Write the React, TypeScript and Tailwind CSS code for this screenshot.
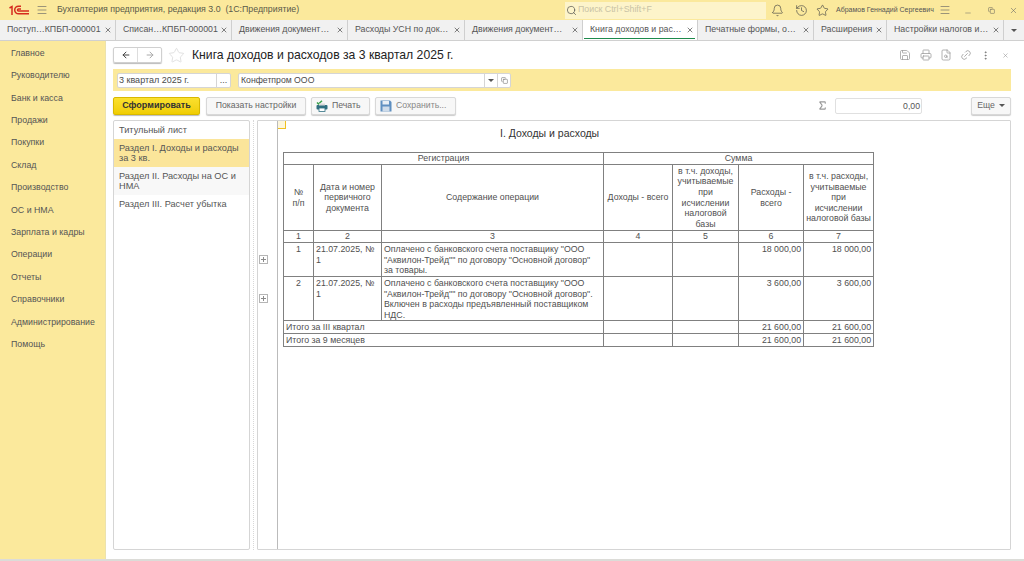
import { Bell, History, Star, Search, Menu, X, ArrowLeft, ArrowRight, Save, Printer, Link2, EllipsisVertical, Minus, Sigma, Copy, FileSearch } from 'lucide-react';

const menu = ['Главное', 'Руководителю', 'Банк и касса', 'Продажи', 'Покупки', 'Склад', 'Производство', 'ОС и НМА', 'Зарплата и кадры', 'Операции', 'Отчеты', 'Справочники', 'Администрирование', 'Помощь'];

const tabs = [
  { label: 'Поступ…КПБП-000001', w: 'w-[116px]' },
  { label: 'Списан…КПБП-000001', w: 'w-[116px]' },
  { label: 'Движения документ…', w: 'w-[116px]' },
  { label: 'Расходы УСН по док…', w: 'w-[117px]' },
  { label: 'Движения документ…', w: 'w-[118px]' },
  { label: 'Книга доходов и рас…', w: 'w-[115px]', active: true },
  { label: 'Печатные формы, о…', w: 'w-[116px]' },
  { label: 'Расширения', w: 'w-[73px]' },
  { label: 'Настройки налогов и…', w: 'w-[117px]' },
];

const th = 'border border-[#808080] font-normal align-middle text-center p-0 leading-[10.6px]';
const td = 'border border-[#808080] align-top px-[2px] pt-[1px] leading-[10.6px]';
const num = td + ' text-right';

function TriangleDown() {
  return <span className="w-0 h-0 border-x-[3px] border-t-[3px] border-x-transparent border-t-[#555]" />;
}

function PlusBox({ className }: { className: string }) {
  return (
    <svg viewBox="0 0 9 9" className={`absolute left-[1px] w-[9px] h-[9px] ${className}`} fill="none" strokeWidth="1">
      <rect x="0.5" y="0.5" width="8" height="8" stroke="#b5b5b5" />
      <path d="M4.500 2v5M2 4.500h5" stroke="#8a8a8a" />
    </svg>
  );
}

function PrintIcon() {
  return (
    <svg viewBox="0 0 12 12" className="w-[12px] h-[12px]">
      <path d="M1 2.500l1.500 1.500L6 .8" fill="none" stroke="#3aa04a" strokeWidth="1.500" />
      <rect x="0.500" y="5" width="11" height="4.500" rx="1" fill="#2f6f80" />
      <rect x="3" y="3.500" width="6" height="2" fill="#d9d9d9" />
      <rect x="3" y="8" width="6" height="3.500" fill="#fff" stroke="#2f6f80" strokeWidth="0.800" />
    </svg>
  );
}

function SaveIcon() {
  return (
    <svg viewBox="0 0 12 12" className="w-[12px] h-[12px]">
      <path d="M.5.5h9.500l1.500 1.500v9.500H.5z" fill="#5f8fc0" />
      <rect x="2.500" y="1" width="6.500" height="3.500" fill="#e8eef5" />
      <rect x="2.500" y="6.500" width="7" height="5" fill="#cfdcea" />
    </svg>
  );
}

export default function App() {
  return (
    <div className="w-[1024px] h-[561px] overflow-hidden flex flex-col bg-white text-[#4b4b4b] font-['Liberation_Sans',sans-serif]">
      <header className="h-5 shrink-0 flex items-center bg-[#fbe99c] text-[8.800px]">
        <svg viewBox="0 0 20 10" className="w-[20px] h-[10px] ml-[9px]" fill="none" stroke="#d62b1f" strokeWidth="1.5">
          <path d="M.5 3l2.500-1.500V10" />
          <path d="M12 1.200H9.500a3.800 3.800 0 0 0 0 7.600H20" />
          <path d="M12 4H9.500a1 1 0 0 0 0 2H20" />
        </svg>
        <Menu className="w-[12px] h-[12px] ml-[7px] text-[#666]" strokeWidth={1.3} />
        <span className="ml-[9px] w-[245px] whitespace-nowrap text-[#5a5a4a]">Бухгалтерия предприятия, редакция 3.0&nbsp; (1С:Предприятие)</span>
        <div className="ml-[263px] w-[201px] h-[17px] bg-[#fdf4ca] flex items-center pl-[1px] text-[#c9c3a5]">
          <Search className="w-[11px] h-[11px] text-[#444]" strokeWidth={1.4} />
          <span className="ml-[1px]">Поиск Ctrl+Shift+F</span>
        </div>
        <Bell className="w-[13px] h-[13px] ml-[4.500px] text-[#444]" strokeWidth={1.2} />
        <History className="w-[13px] h-[13px] ml-[11px] text-[#444]" strokeWidth={1.2} />
        <Star className="w-[13px] h-[13px] ml-[8px] text-[#444]" strokeWidth={1.2} />
        <span className="ml-[7.500px] w-[96px] whitespace-nowrap text-[7px] text-[#555]">Абрамов Геннадий Сергеевич</span>
        <Menu className="w-[12px] h-[12px] ml-[7px] text-[#666]" strokeWidth={1.3} />
        <Minus className="w-[8px] h-[8px] ml-[13px] mt-[5px] text-[#666]" strokeWidth={1.5} />
        <Copy className="w-[7px] h-[7px] ml-[15.500px] text-[#555]" strokeWidth={1.6} />
        <X className="w-[9px] h-[9px] ml-[14px] text-[#666]" strokeWidth={1.5} />
      </header>

      <nav className="h-[21px] shrink-0 flex bg-[#f1f1f1] border-b border-[#d0d0d0] text-[8.800px]">
        {tabs.map((t) => (
          <div key={t.label + t.w} className={`${t.w} shrink-0 h-full flex items-center justify-between pl-[7px] pr-[3px] border-r border-[#cfcfcf] ${t.active ? 'bg-white' : ''} relative`}>
            <span className="whitespace-nowrap text-[#555]">{t.label}</span>
            <X className="w-[8px] h-[8px] text-[#444] shrink-0" strokeWidth={2} />
            {t.active && <span className="absolute left-[1px] right-[2px] bottom-[1px] h-px bg-[#1e8a4c]" />}
          </div>
        ))}
        <div className="flex-1 flex items-center justify-center"><TriangleDown /></div>
      </nav>

      <div className="flex-1 min-h-0 flex">
        <aside className="w-[106px] shrink-0 bg-[#fbe99c] border-r border-[#ece2ad] pt-[1.300px] text-[8.800px] text-[#555]">
          {menu.map((m) => (
            <div key={m} className="h-[22.400px] flex items-center pl-[11px]">{m}</div>
          ))}
        </aside>

        <main className="flex-1 min-w-0 flex flex-col pl-[7px] pr-[13px] pb-[9px]">
          <div className="h-[28px] shrink-0 flex items-center">
            <div className="w-[49px] h-[16px] flex rounded-[2px] border border-[#d0d0d0] shadow-[0_1px_1px_#bbb]">
              <div className="flex-1 flex items-center justify-center border-r border-[#ddd]"><ArrowLeft className="w-[10px] h-[10px] text-[#444]" strokeWidth={2.4} /></div>
              <div className="flex-1 flex items-center justify-center"><ArrowRight className="w-[10px] h-[10px] text-[#aaa]" strokeWidth={2.4} /></div>
            </div>
            <Star className="w-[17px] h-[17px] ml-[6px] text-[#d5d5d5]" strokeWidth={1} />
            <h1 className="ml-[7px] text-[12.200px] text-[#222]">Книга доходов и расходов за 3 квартал 2025 г.</h1>
            <div className="ml-auto flex items-center text-[#999]">
              <Save className="w-[12px] h-[12px]" strokeWidth={1.5} />
              <Printer className="w-[12px] h-[12px] ml-[9px]" strokeWidth={1.5} />
              <FileSearch className="w-[12px] h-[12px] ml-[8px]" strokeWidth={1.5} />
              <Link2 className="w-[12px] h-[12px] ml-[8px] -rotate-45" strokeWidth={1.5} />
              <EllipsisVertical className="w-[11px] h-[11px] ml-[7.500px] text-[#777]" strokeWidth={2} />
              <X className="w-[7px] h-[7px] ml-[11px] mr-[2.500px]" strokeWidth={2} />
            </div>
          </div>

          <div className="h-[22px] shrink-0 bg-[#fbe99c] flex items-center pl-[4px] text-[9px]">
            <div className="w-[114px] h-[15px] flex bg-white border border-[#d5d5d5] rounded-[2px]">
              <span className="flex-1 pl-[1px] leading-[13px]">3 квартал 2025 г.</span>
              <span className="w-[14px] border-l border-[#d5d5d5] text-center leading-[12px]">...</span>
            </div>
            <div className="ml-[7px] w-[273px] h-[15px] flex bg-white border border-[#d5d5d5] rounded-[2px]">
              <span className="flex-1 pl-[2px] leading-[13px] text-[8.700px]">Конфетпром ООО</span>
              <span className="w-[13px] border-l border-[#d5d5d5] flex items-center justify-center"><TriangleDown /></span>
              <span className="w-[13px] border-l border-[#d5d5d5] flex items-center justify-center"><Copy className="w-[7px] h-[7px]" strokeWidth={1.5} /></span>
            </div>
          </div>

          <div className="h-[29px] shrink-0 flex items-center text-[8.700px]">
            <button className="w-[87px] h-[18px] bg-gradient-to-b from-[#fbe02c] to-[#f0cd00] border border-[#d8b800] rounded-[2px] font-bold text-[9px] text-[#333] shadow-[0_1px_1px_#bbb]">Сформировать</button>
            <button className="ml-[6px] w-[100px] h-[18px] bg-[#f7f7f7] border border-[#d8d8d8] rounded-[2px] text-[#666] shadow-[0_1px_1px_#ccc]">Показать настройки</button>
            <button className="ml-[5px] w-[59px] h-[18px] flex items-center bg-[#f7f7f7] border border-[#d8d8d8] rounded-[2px] text-[#666] shadow-[0_1px_1px_#ccc] pl-[4px]">
              <PrintIcon /><span className="ml-[4px]">Печать</span>
            </button>
            <button className="ml-[5px] w-[81px] h-[18px] flex items-center bg-[#f7f7f7] border border-[#d8d8d8] rounded-[2px] text-[#888] shadow-[0_1px_1px_#ccc] pl-[4px]">
              <SaveIcon /><span className="ml-[4px]">Сохранить...</span>
            </button>
            <Sigma className="w-[11px] h-[11px] ml-[361px] text-[#999]" strokeWidth={2.4} />
            <div className="ml-[7px] w-[87px] h-[16px] border border-[#e0e0e0] rounded-[2px] text-right pr-[1px] leading-[14px] text-[#555]">0,00</div>
            <button className="ml-auto w-[40px] h-[18px] flex items-center justify-center gap-[4px] bg-[#f7f7f7] border border-[#d8d8d8] rounded-[2px] text-[#666] shadow-[0_1px_1px_#ccc]">Еще <TriangleDown /></button>
          </div>

          <div className="flex-1 min-h-0 flex">
            <div className="w-[137px] shrink-0 border border-[#d5d5d5] rounded-[2px] text-[9.200px] leading-[10.500px] text-[#555]">
              <div className="h-[18px] flex items-center pl-[5px]">Титульный лист</div>
              <div className="h-[28px] flex items-center pl-[5px] pr-[3px] bg-[#fbe59a]">Раздел I. Доходы и расходы за 3 кв.</div>
              <div className="h-[28px] flex items-center pl-[5px] pr-[3px] bg-[#f8f8f8]">Раздел II. Расходы на ОС и НМА</div>
              <div className="h-[18px] flex items-center pl-[5px]">Раздел III. Расчет убытка</div>
            </div>

            <div className="w-[7px] shrink-0 flex justify-center"><span className="h-full border-l border-dotted border-[#d8d8d8]" /></div>

            <div className="flex-1 min-w-0 flex border border-[#d5d5d5] rounded-[1px]">
              <div className="w-[20px] shrink-0 border-r border-[#bbb] relative">
                <PlusBox className="top-[134px]" />
                <PlusBox className="top-[173px]" />
              </div>
              <div className="flex-1 min-w-0 relative pl-[5px]">
                <span className="absolute left-0 top-0 w-[8px] h-[8px] bg-[#fdf6dc] border-r border-b border-[#f0c020]" />
                <h2 className="h-[31px] pt-[6px] pl-[217px] text-[10.500px] leading-[13px] text-[#333]">I. Доходы и расходы</h2>
                <table className="w-[590px] table-fixed border-collapse text-[8.800px] text-[#505050]">
                  <colgroup>
                    <col className="w-[30px]" /><col className="w-[68px]" /><col className="w-[222px]" /><col className="w-[69px]" /><col className="w-[66px]" /><col className="w-[65px]" /><col className="w-[70px]" />
                  </colgroup>
                  <tbody>
                    <tr className="h-[12px]"><th colSpan={3} className={th}>Регистрация</th><th colSpan={4} className={th}>Сумма</th></tr>
                    <tr className="h-[66px]">
                      <th className={th}>№<br />п/п</th>
                      <th className={th}>Дата и номер<br />первичного<br />документа</th>
                      <th className={th}>Содержание операции</th>
                      <th className={th}>Доходы - всего</th>
                      <th className={th}>в т.ч. доходы,<br />учитываемые<br />при<br />исчислении<br />налоговой<br />базы</th>
                      <th className={th}>Расходы -<br />всего</th>
                      <th className={th}>в т.ч. расходы,<br />учитываемые<br />при<br />исчислении<br />налоговой базы</th>
                    </tr>
                    <tr className="h-[12px]">{[1, 2, 3, 4, 5, 6, 7].map((n) => <th key={n} className={th}>{n}</th>)}</tr>
                    <tr className="h-[34px]">
                      <td className={td + ' text-center'}>1</td>
                      <td className={td}>21.07.2025, № 1</td>
                      <td className={td}>Оплачено с банковского счета поставщику "ООО "Аквилон-Трейд"" по договору "Основной договор" за товары.</td>
                      <td className={td} /><td className={td} />
                      <td className={num}>18 000,00</td><td className={num}>18 000,00</td>
                    </tr>
                    <tr className="h-[44px]">
                      <td className={td + ' text-center'}>2</td>
                      <td className={td}>21.07.2025, № 1</td>
                      <td className={td}>Оплачено с банковского счета поставщику "ООО "Аквилон-Трейд"" по договору "Основной договор". Включен в расходы предъявленный поставщиком НДС.</td>
                      <td className={td} /><td className={td} />
                      <td className={num}>3 600,00</td><td className={num}>3 600,00</td>
                    </tr>
                    <tr className="h-[13px]">
                      <td colSpan={3} className={td}>Итого за III квартал</td><td className={td} /><td className={td} />
                      <td className={num}>21 600,00</td><td className={num}>21 600,00</td>
                    </tr>
                    <tr className="h-[13px]">
                      <td colSpan={3} className={td}>Итого за 9 месяцев</td><td className={td} /><td className={td} />
                      <td className={num}>21 600,00</td><td className={num}>21 600,00</td>
                    </tr>
                  </tbody>
                </table>
              </div>
            </div>
          </div>
        </main>
      </div>
      <div className="h-[2px] shrink-0 bg-[#dcdcd8]" />
    </div>
  );
}
